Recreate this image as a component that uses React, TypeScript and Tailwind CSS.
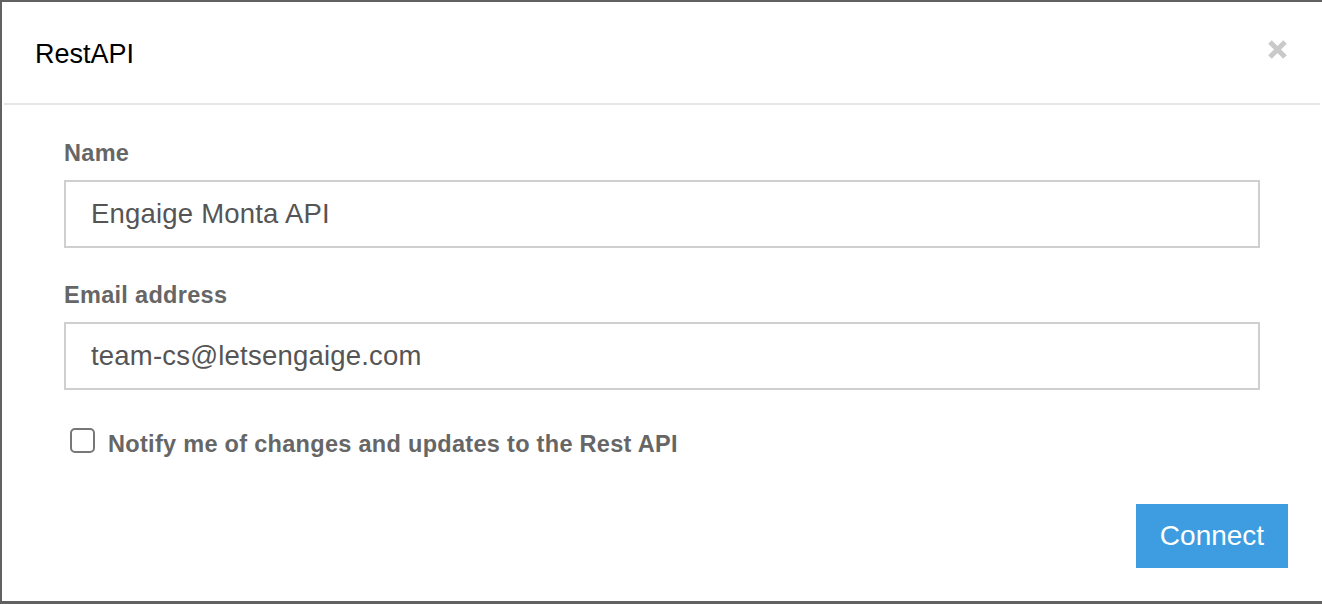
import { useState } from "react";

function CloseIcon() {
  return (
    <svg width="21" height="21" viewBox="0 0 21 21" aria-hidden="true">
      <path d="M3 3 L18 18 M18 3 L3 18" stroke="#c9c9c9" strokeWidth="5" strokeLinecap="butt" />
    </svg>
  );
}

function Field({ label, value }: { label: string; value: string }) {
  return (
    <div className="flex flex-col">
      <label className="mb-[15px] text-[23.5px] leading-[24px] font-bold tracking-[0.3px] text-[#666666]">
        {label}
      </label>
      <div className="flex h-[68px] items-center border-2 border-[#cfcfcf] px-[25px] text-[27.5px] tracking-[0.2px] text-[#555555]">
        {value}
      </div>
    </div>
  );
}

export default function App() {
  const [notify, setNotify] = useState(false);

  return (
    <div
      className="flex h-[604px] w-[1322px] flex-col border-t-2 border-b-[3px] border-l-2 border-[#616161] bg-white"
      style={{ fontFamily: '"Liberation Sans", Arial, sans-serif' }}
    >
      <div className="flex h-[101px] items-center justify-between pr-[34px] pl-[33px]">
        <h1 className="mt-[3px] text-[27px] leading-none text-black">RestAPI</h1>
        <button className="-mt-[6px]" aria-label="Close">
          <CloseIcon />
        </button>
      </div>
      <div className="mx-[2px] h-[2px] bg-[#e6e6e6]" />

      <div className="flex flex-col px-[62px] pt-[36px]">
        <Field label="Name" value="Engaige Monta API" />
        <div className="mt-[35px]">
          <Field label="Email address" value="team-cs@letsengaige.com" />
        </div>
        <label className="mt-[38px] flex h-[24px] cursor-pointer items-center">
          <span
            onClick={() => setNotify(!notify)}
            className="ml-[6px] h-[25px] w-[25px] rounded-[5px] border-2 border-[#777777] bg-white"
          />
          <span className="ml-[13px] mt-[10px] text-[23.5px] font-bold tracking-[0.3px] text-[#666666]">
            Notify me of changes and updates to the Rest API
          </span>
        </label>
      </div>

      <div className="mt-[52px] flex justify-end pr-[34px]">
        <button className="flex h-[64px] w-[152px] items-center justify-center bg-[#3d9de0] text-[28px] text-white">
          Connect
        </button>
      </div>
    </div>
  );
}
